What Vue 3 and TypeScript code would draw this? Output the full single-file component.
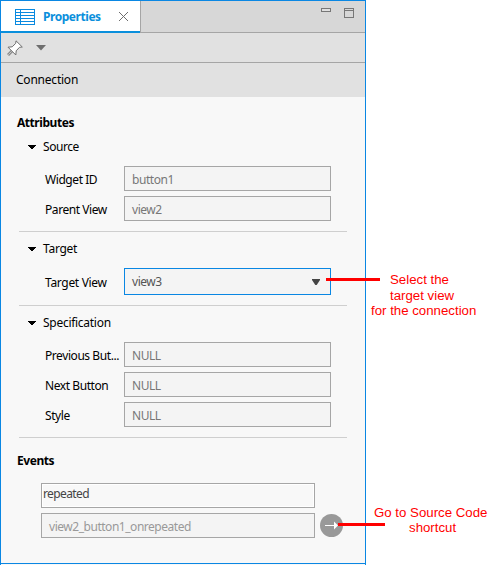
<script setup lang="ts">
interface Field {
  label: string
  value: string
  select?: boolean
}
interface Section {
  title: string
  key: string
  fields: Field[]
}

const sections: Section[] = [
  {
    title: 'Source',
    key: 'source',
    fields: [
      { label: 'Widget ID', value: 'button1' },
      { label: 'Parent View', value: 'view2' },
    ],
  },
  {
    title: 'Target',
    key: 'target',
    fields: [{ label: 'Target View', value: 'view3', select: true }],
  },
  {
    title: 'Specification',
    key: 'specification',
    fields: [
      { label: 'Previous But...', value: 'NULL' },
      { label: 'Next Button', value: 'NULL' },
      { label: 'Style', value: 'NULL' },
    ],
  },
]
</script>

<template>
  <div class="page">
    <div class="panel">
      <div class="tabbar">
        <div class="tab">
          <svg class="table-icon" width="20" height="16" viewBox="0 0 20 16" shape-rendering="crispEdges">
            <rect x=".5" y=".5" width="19" height="15" fill="#fff" stroke="#0a8ae0" />
            <path d="M1 3.5h18M1 6.5h18M1 9.5h18M1 12.5h18M5.5 1v14" fill="none" stroke="#0a8ae0" />
          </svg>
          <span class="tab-title">Properties</span>
          <svg class="close" width="9" height="9" viewBox="0 0 9 9">
            <path d="M0 0l9 9M9 0l-9 9" stroke="#6e6e6e" fill="none" />
          </svg>
        </div>
        <div class="window-buttons">
          <svg class="minimize" width="10" height="4" viewBox="0 0 10 4" shape-rendering="crispEdges">
            <rect x=".5" y=".5" width="9" height="3" fill="#e0e0e0" stroke="#777" />
          </svg>
          <svg width="10" height="10" viewBox="0 0 10 10" shape-rendering="crispEdges">
            <path d="M.5.5h9v9h-9zM1 2.5h8" fill="none" stroke="#777" />
          </svg>
        </div>
      </div>
      <div class="toolbar">
        <svg class="pin" width="16" height="16" viewBox="0 0 16 16">
          <path d="M1 15l4.5-4.5" stroke="#8c8c8c" stroke-width="3" fill="none" />
          <path d="M1.2 14.8l4-4" stroke="#c4c4c4" stroke-width="1" fill="none" />
          <path d="M9 .8L15.3 7 12.5 7.3 9.2 10.8 8.8 15 1 7.2 5.2 6.8 8.7 3.4z" fill="#fff" stroke="#6f6f6f" />
        </svg>
        <svg class="menu-arrow" width="10" height="6" viewBox="0 0 10 6">
          <path d="M0 0h10L5 5.5z" fill="#6e6e6e" />
        </svg>
      </div>
      <div class="title">Connection</div>

      <div class="content">
        <h2 class="h-attributes">Attributes</h2>
        <section v-for="s in sections" :key="s.key" :class="['section', s.key]">
          <div class="section-head">
            <svg width="8" height="4" viewBox="0 0 8 4" shape-rendering="crispEdges">
              <path d="M0 0h8v1H0zM1 1h6v1H1zM2 2h4v1H2zM3 3h2v1H3z" fill="#000" />
            </svg>
            <span>{{ s.title }}</span>
          </div>
          <div class="fields">
            <div v-for="f in s.fields" :key="f.label" class="row">
              <span class="label">{{ f.label }}</span>
              <div :class="['box', { select: f.select }]">
                <span>{{ f.value }}</span>
                <svg v-if="f.select" width="8" height="6" viewBox="0 0 8 6">
                  <path d="M0 0h8v1L4.7 6H3.3L0 1z" fill="#444" />
                </svg>
              </div>
            </div>
          </div>
        </section>
        <h2 class="h-events">Events</h2>
        <div class="events">
          <div class="box event-name"><span>repeated</span></div>
          <div class="event-row">
            <div class="box handler"><span>view2_button1_onrepeated</span></div>
            <svg width="23" height="23" viewBox="0 0 23 23">
              <circle cx="11.5" cy="11.5" r="11.5" fill="#999" />
              <path d="M5 11.5h10" fill="none" stroke="#fff" />
              <path d="M14 7.5l4 4-4 4z" fill="#fff" />
            </svg>
          </div>
        </div>
      </div>
    </div>

    <div class="line line-target"></div>
    <div class="note note-target">
      <span>Select the</span>
      <span>target view</span>
      <span>for the connection</span>
    </div>
    <div class="line line-source"></div>
    <div class="note note-source">
      <span>Go to Source Code</span>
      <span>shortcut</span>
    </div>
  </div>
</template>

<style>
body {
  margin: 0;
  background: #fff;
}
</style>

<style scoped>
.page {
  position: relative;
  width: 491px;
  height: 565px;
  overflow: hidden;
  font: 12px/16px 'Noto Sans', 'Open Sans', sans-serif;
  color: #000;
}
.page * {
  box-sizing: border-box;
}
svg {
  display: block;
  flex: none;
}
span {
  white-space: nowrap;
}
.panel {
  width: 366px;
  height: 565px;
  border: 1px solid #0a87e3;
  border-bottom: 0;
  background: #f8f8f8;
}
.tabbar {
  display: flex;
  justify-content: space-between;
  height: 32px;
  background: linear-gradient(#a5a5a5, #a5a5a5) bottom / 100% 1px no-repeat #d7d7d7;
}
.tab {
  display: flex;
  width: 140px;
  height: 32px;
  padding-left: 14px;
  background: #fff;
  border-right: 1px solid #a5a5a5;
  box-shadow: inset 0 -2px #0a8fdc;
}
.table-icon {
  margin-top: 8px;
}
.tab-title {
  width: 58px;
  margin: 8px 0 0 8px;
  font-weight: 700;
  color: #0a8fdc;
  letter-spacing: -0.45px;
}
.close {
  margin: 11px 0 0 18px;
}
.window-buttons {
  display: flex;
  gap: 13px;
  padding: 7px 11px 0 0;
}
.toolbar {
  display: flex;
  height: 30px;
  padding-left: 6px;
  background: #e1e1e1;
  border-bottom: 1px solid #a5a5a5;
}
.pin {
  margin-top: 7px;
}
.menu-arrow {
  margin: 12px 0 0 13px;
}
.title {
  height: 34px;
  padding: 9px 0 0 15px;
  background: #e1e1e1;
  letter-spacing: -0.22px;
}
.content {
  height: 467px;
  padding: 18px 0 0 15px;
  border-bottom: 1px solid #0a87e3;
}
h2 {
  margin: 0 0 0 1px;
  height: 16px;
  font-size: 12px;
  line-height: 16px;
  font-weight: 700;
  letter-spacing: -0.45px;
}
.section {
  width: 328px;
  margin-left: 3px;
  border-bottom: 1px solid #cfcfcf;
}
.section-head {
  display: flex;
  align-items: center;
  gap: 7px;
  height: 16px;
  padding-left: 9px;
  letter-spacing: -0.28px;
}
.source {
  height: 101px;
  padding-top: 8px;
}
.source .section-head {
  letter-spacing: -0.45px;
}
.target {
  height: 74px;
  padding-top: 9px;
}
.specification {
  height: 132px;
  padding-top: 9px;
}
.fields {
  display: flex;
  flex-direction: column;
  gap: 5px;
  padding-top: 11px;
}
.row {
  display: flex;
  align-items: center;
  padding-left: 26px;
}
.label {
  width: 79px;
  padding-top: 2px;
  letter-spacing: -0.43px;
}
.target .label {
  letter-spacing: -0.32px;
}
.box {
  display: flex;
  align-items: center;
  justify-content: space-between;
  width: 207px;
  height: 25px;
  padding: 2px 7px 0;
  border: 1px solid #a6a6a6;
  background: #f4f4f4;
  color: #777;
  letter-spacing: -0.45px;
}
.box.select {
  height: 27px;
  padding: 0 10px 0 7px;
  border-color: #0a87e3;
  color: #555;
}
.h-events {
  margin-top: 15px;
}
.events {
  padding: 14px 0 0 25px;
}
.box.event-name {
  width: 274px;
  padding: 0 0 4px 1px;
  background: #f8f8f8;
  color: #444;
  box-shadow: inset 0 0 0 1px #fff;
  letter-spacing: -0.6px;
}
.event-row {
  display: flex;
  align-items: center;
  gap: 5px;
  margin-top: 5px;
}
.box.handler {
  width: 274px;
  color: #999;
  letter-spacing: -0.47px;
}
.line {
  position: absolute;
  height: 3px;
  background: #f00;
}
.line-target {
  left: 326px;
  top: 278px;
  width: 54px;
}
.line-source {
  left: 338px;
  top: 523px;
  width: 47px;
}
.note {
  position: absolute;
  display: flex;
  flex-direction: column;
  font: 13.25px/15.5px 'Liberation Sans', Arial, sans-serif;
  color: #f00;
}
.note-target {
  left: 371px;
  top: 272px;
}
.note-target span:nth-child(-n + 2) {
  padding-left: 19px;
}
.note-source {
  left: 374px;
  top: 505px;
  line-height: 15px;
}
.note-source span + span {
  padding-left: 35px;
}
</style>
